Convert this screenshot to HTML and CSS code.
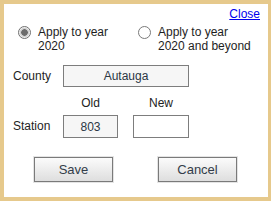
FILE: index.html
```html
<!DOCTYPE html>
<html>
<head>
<meta charset="utf-8">
<link rel="stylesheet" href="styles.css">
</head>
<body>
<div class="dialog">
  <div class="close-row"><a href="#" class="close">Close</a></div>
  <div class="radios">
    <label class="opt"><span class="radio checked"></span><span class="opt-text">Apply to year<br>2020</span></label>
    <label class="opt"><span class="radio"></span><span class="opt-text">Apply to year<br>2020 and beyond</span></label>
  </div>
  <div class="row county-row">
    <span class="lbl">County</span>
    <span class="box county-box">Autauga</span>
  </div>
  <div class="heads">
    <span class="head old-w">Old</span>
    <span class="head new-w">New</span>
  </div>
  <div class="row station-row">
    <span class="lbl">Station</span>
    <span class="box old-w small">803</span>
    <span class="box new-w small blank"></span>
  </div>
  <div class="buttons">
    <button class="btn">Save</button>
    <button class="btn">Cancel</button>
  </div>
</div>
</body>
</html>
```
FILE: styles.css
```css
html, body {
  margin: 0;
  padding: 0;
  background: #ffffff;
}
.dialog {
  box-sizing: border-box;
  width: 271px;
  height: 201px;
  border-style: solid;
  border-color: #e6c98c;
  border-width: 4px 3px 4px 4px;
  background: #ffffff;
  font-family: "Liberation Sans", Arial, sans-serif;
  font-size: 12px;
  line-height: 14px;
  color: #1e1e1e;
  padding: 3px 0 0 9px;
}
.close-row {
  display: flex;
  justify-content: flex-end;
  padding-right: 8px;
  height: 14px;
}
.close {
  color: #0000ee;
  text-decoration: underline;
}
.radios {
  display: flex;
  margin-top: 4px;
  margin-left: 5px;
}
.opt {
  display: flex;
  align-items: flex-start;
  width: 120px;
}
.radio {
  box-sizing: border-box;
  width: 13px;
  height: 13px;
  border: 1px solid #7a7a7a;
  border-radius: 50%;
  background: #ffffff;
  margin-top: 1px;
  margin-right: 7px;
  flex: none;
}
.radio.checked {
  border-color: #6f6f6f;
  background: radial-gradient(circle, #6c6c6c 0, #6c6c6c 3px, #c9c9c9 3.5px, #d8d8d8 4.5px, #ffffff 5.5px);
}
.opt-text {
  white-space: nowrap;
}
.row {
  display: flex;
  align-items: center;
}
.lbl {
  width: 50px;
  flex: none;
}
.county-row {
  margin-top: 12px;
}
.box {
  box-sizing: border-box;
  border: 1px solid #7d7d7d;
  background: #f6f6f6;
  color: #2b3645;
  text-align: center;
  display: block;
}
.county-box {
  width: 126px;
  height: 22px;
  line-height: 20px;
}
.heads {
  display: flex;
  margin-left: 50px;
  margin-top: 9px;
  gap: 15px;
}
.head {
  text-align: center;
  color: #222;
}
.old-w { width: 55px; }
.new-w { width: 56px; }
.station-row {
  margin-top: 5px;
}
.small {
  height: 23px;
  line-height: 23px;
}
.station-row .blank {
  margin-left: 15px;
  background: #ffffff;
}
.station-row .lbl {
  margin-top: -2px;
}
.buttons {
  display: flex;
  gap: 45px;
  margin-top: 19px;
  margin-left: 21px;
}
.btn {
  box-sizing: border-box;
  width: 79px;
  height: 25px;
  border: 1px solid #7a7a7a;
  box-shadow: 0 0 0 1px #e4e4e4;
  border-radius: 0;
  background: linear-gradient(#fbfbfb, #dedede);
  font-family: "Liberation Sans", Arial, sans-serif;
  font-size: 13px;
  color: #333d49;
  padding: 0;
  margin: 0;
}
```
